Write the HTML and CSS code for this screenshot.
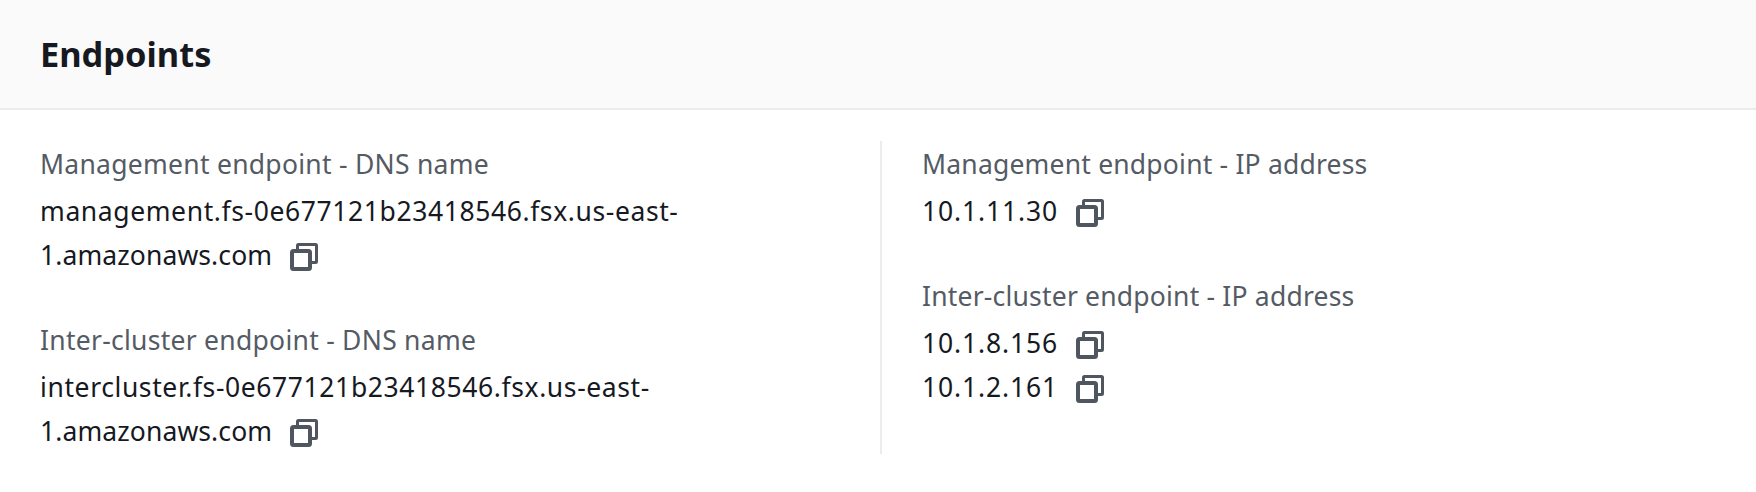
FILE: index.html
```html
<!DOCTYPE html>
<html lang="en">
<head>
<meta charset="utf-8">
<title>Endpoints</title>
<link rel="stylesheet" href="styles.css">
</head>
<body>
<svg class="defs" width="0" height="0" aria-hidden="true">
  <symbol id="copy" viewBox="0 0 28 28">
    <path d="M7.5 6V2.5a1 1 0 0 1 1-1h17a1 1 0 0 1 1 1v16a1 1 0 0 1-1 1H22" class="thin"/>
    <rect x="2" y="8" width="18" height="18" rx="1.5" class="thick"/>
  </symbol>
</svg>
<section class="panel">
  <header class="head"><h2>Endpoints</h2></header>
  <div class="body">
    <div class="col col-left">
      <div class="item">
        <div class="label">Management endpoint - DNS name</div>
        <div class="value wrap">management.fs-0e677121b23418546.fsx.us-east-<span class="host">1.amazonaws.com</span><svg class="icon"><use href="#copy"/></svg></div>
      </div>
      <div class="item">
        <div class="label">Inter-cluster endpoint - DNS name</div>
        <div class="value wrap">intercluster.fs-0e677121b23418546.fsx.us-east-<span class="host">1.amazonaws.com</span><svg class="icon"><use href="#copy"/></svg></div>
      </div>
    </div>
    <div class="col col-right">
      <div class="item">
        <div class="label tight">Management endpoint - IP address</div>
        <div class="value ip">10.1.11.30<svg class="icon"><use href="#copy"/></svg></div>
      </div>
      <div class="item">
        <div class="label tight">Inter-cluster endpoint - IP address</div>
        <div class="value ip">10.1.8.156<svg class="icon"><use href="#copy"/></svg></div>
        <div class="value ip">10.1.2.161<svg class="icon"><use href="#copy"/></svg></div>
      </div>
    </div>
  </div>
</section>
</body>
</html>
```
FILE: styles.css
```css
html, body { margin: 0; padding: 0; background: #fff; }
body { font-family: "Noto Sans", "Open Sans", sans-serif; color: #16191f; }
.defs { position: absolute; }
.head { height: 110px; box-sizing: border-box; background: #fafafa; border-bottom: 2px solid #eaeded; padding: 0 40px; display: flex; align-items: center; }
.head h2 { margin: 0; font-size: 34.4px; line-height: 44px; font-weight: 700; }
.body { display: grid; grid-template-columns: 880px 1fr; padding-top: 31px; }
.col-left { padding-left: 40px; padding-right: 190px; }
.col-right { border-left: 2px solid #eaeded; padding-left: 40px; height: 313px; }
.item { margin-bottom: 40px; }
.label { font-size: 26.5px; line-height: 44px; letter-spacing: 0.27px; color: #545b64; padding-top: 1px; margin-bottom: 3px; }
.label.tight { letter-spacing: 0.2px; }
.value { font-size: 26.5px; line-height: 44px; letter-spacing: 0.6px; }
.value.ip { letter-spacing: 0.85px; }
.host { letter-spacing: 0.1px; }
.icon { width: 28px; height: 28px; margin-left: 18px; vertical-align: -6px; }
.thin, .thick { fill: none; stroke: #4f5660; }
.thin { stroke-width: 3; }
.thick { stroke-width: 4; }
```
